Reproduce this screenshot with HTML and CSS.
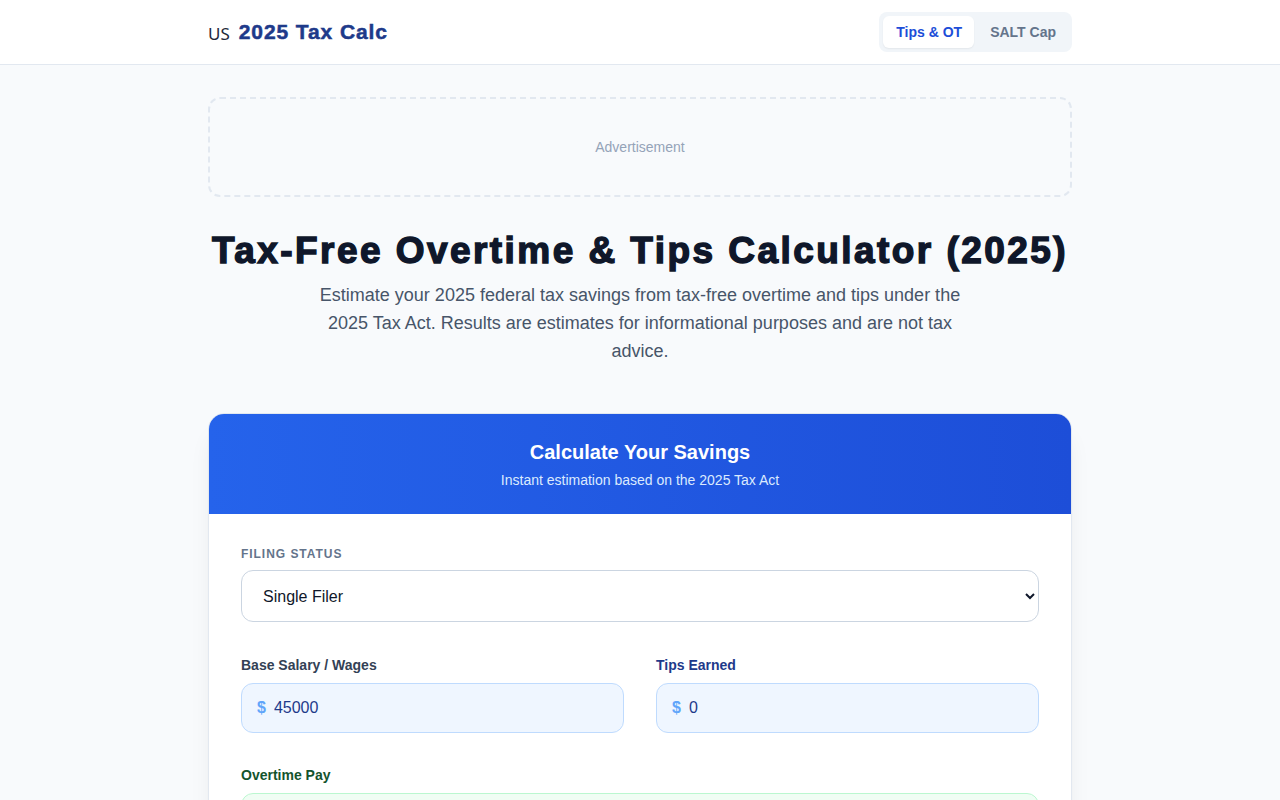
FILE: index.html
```html
<!DOCTYPE html>
<html>
<head>
    <title>Tax-Free Overtime & Tips Calculator (2025)</title>
    <meta name="viewport" content="width=device-width, initial-scale=1">
    <link rel="stylesheet" href="styles.css">
</head>
<body>
    <header class="topbar">
        <div class="container topbar-inner">
            <a class="brand" href="#">
                <span class="flag">US</span>
                <span class="brand-name">2025 Tax Calc</span>
            </a>
            <nav class="tabs">
                <a class="tab active" href="#">Tips &amp; OT</a>
                <a class="tab" href="#">SALT Cap</a>
            </nav>
        </div>
    </header>

    <main class="container">
        <div class="ad-slot">Advertisement</div>

        <h1 class="page-title">Tax-Free Overtime &amp; Tips Calculator (2025)</h1>
        <p class="lead">Estimate your 2025 federal tax savings from tax-free overtime and tips under the 2025 Tax Act. Results are estimates for informational purposes and are not tax advice.</p>

        <section class="card">
            <div class="card-head">
                <h2>Calculate Your Savings</h2>
                <p>Instant estimation based on the 2025 Tax Act</p>
            </div>
            <div class="card-body">
                <div class="field">
                    <label class="caps-label" for="status">Filing Status</label>
                    <select id="status" class="select">
                        <option>Single Filer</option>
                        <option>Married Filing Jointly</option>
                        <option>Head of Household</option>
                    </select>
                </div>

                <div class="field-row">
                    <div class="field">
                        <label class="label" for="salary">Base Salary / Wages</label>
                        <div class="money blue">
                            <span class="sign">$</span>
                            <input id="salary" type="text" value="45000">
                        </div>
                    </div>
                    <div class="field">
                        <label class="label label-blue" for="tips">Tips Earned</label>
                        <div class="money blue">
                            <span class="sign">$</span>
                            <input id="tips" type="text" value="0">
                        </div>
                    </div>
                </div>

                <div class="field">
                    <label class="label label-green" for="overtime">Overtime Pay</label>
                    <div class="money green">
                        <span class="sign">$</span>
                        <input id="overtime" type="text" value="0">
                    </div>
                </div>
            </div>
        </section>
    </main>
</body>
</html>
```

FILE: styles.css
```css
body {
    font-family: "Liberation Sans", Arial, sans-serif;
    margin: 0;
    background: #f8fafc;
    color: #0f172a;
}
.container {
    max-width: 864px;
    margin: 0 auto;
}
.topbar {
    background: white;
    border-bottom: 1px solid #e2e8f0;
}
.topbar-inner {
    height: 64px;
    display: flex;
    align-items: center;
    justify-content: space-between;
}
.brand {
    display: flex;
    align-items: center;
    gap: 9px;
    text-decoration: none;
}
.flag {
    font-family: "Noto Sans", sans-serif;
    font-size: 17px;
    color: #1e293b;
    padding-top: 2px;
}
/* heavy display weight: bold face thickened with a stroke */
.brand-name {
    font-size: 21px;
    font-weight: bold;
    color: #1e3a8a;
    letter-spacing: 0.9px;
    -webkit-text-stroke: 0.5px #1e3a8a;
}
.tabs {
    display: flex;
    gap: 4px;
    background: #f1f5f9;
    border-radius: 8px;
    padding: 4px;
}
.tab {
    font-size: 14px;
    font-weight: bold;
    color: #64748b;
    text-decoration: none;
    padding: 8px 12px;
    border-radius: 6px;
}
.tab.active {
    padding-left: 13px;
    background: white;
    color: #1d4ed8;
    box-shadow: 0 1px 2px rgba(0,0,0,0.06);
}
.ad-slot {
    margin-top: 32px;
    height: 96px;
    border: 2px dashed #e2e8f0;
    border-radius: 12px;
    display: flex;
    align-items: center;
    justify-content: center;
    font-size: 14px;
    color: #94a3b8;
}
.page-title {
    font-size: 37px;
    font-weight: 900;
    line-height: 40px;
    letter-spacing: 2.45px;
    -webkit-text-stroke: 1.4px #0f172a;
    text-align: center;
    margin: 34px 0 10px;
    color: #0f172a;
}
.lead {
    max-width: 660px;
    margin: 0 auto 48px;
    text-align: center;
    font-size: 18px;
    line-height: 28px;
    color: #475569;
}
.card {
    background: white;
    border: 1px solid #e2e8f0;
    border-radius: 16px;
    overflow: hidden;
    box-shadow: 0 20px 25px -5px rgba(15,23,42,0.08), 0 8px 10px -6px rgba(15,23,42,0.06);
}
.card-head {
    background: linear-gradient(90deg, #2563eb, #1d4ed8);
    color: white;
    text-align: center;
    height: 100px;
    box-sizing: border-box;
    padding-top: 26px;
}
.card-head h2 {
    margin: 0;
    font-size: 20px;
    line-height: 24px;
}
.card-head p {
    margin: 8px 0 0;
    font-size: 14px;
    color: #dbeafe;
}
.card-body {
    padding: 32px 32px 32px;
    display: flex;
    flex-direction: column;
    gap: 32px;
}
.field-row {
    display: grid;
    grid-template-columns: 1fr 1fr;
    gap: 32px;
    margin-top: 1px;
}
.caps-label, .label {
    display: block;
    font-weight: bold;
    margin-bottom: 8px;
}
.caps-label {
    font-size: 12px;
    line-height: 16px;
    letter-spacing: 0.08em;
    text-transform: uppercase;
    color: #64748b;
}
.label {
    font-size: 14px;
    line-height: 20px;
    color: #334155;
}
.label-blue { color: #1e3a8a; }
.label-green { color: #14532d; }
.select {
    display: block;
    width: 100%;
    height: 52px;
    border: 1px solid #cbd5e1;
    border-radius: 12px;
    padding: 0 16px 0 17px;
    font-family: "Liberation Sans", Arial, sans-serif;
    font-size: 16px;
    color: #0f172a;
    background: white;
}
.money {
    display: flex;
    align-items: center;
    height: 50px;
    box-sizing: border-box;
    border-radius: 12px;
    padding: 0 15px;
    gap: 8px;
}
.money.blue {
    background: #eff6ff;
    border: 1px solid #bfdbfe;
}
.money.green {
    background: #f0fdf4;
    border: 1px solid #bbf7d0;
}
.sign {
    font-weight: bold;
    font-size: 16px;
    color: #60a5fa;
}
.money.green .sign { color: #4ade80; }
.money input {
    flex: 1;
    border: none;
    background: transparent;
    outline: none;
    font-family: "Liberation Sans", Arial, sans-serif;
    font-size: 16px;
    color: #1e3a8a;
    padding: 0;
}
.money.green input { color: #14532d; }
```
